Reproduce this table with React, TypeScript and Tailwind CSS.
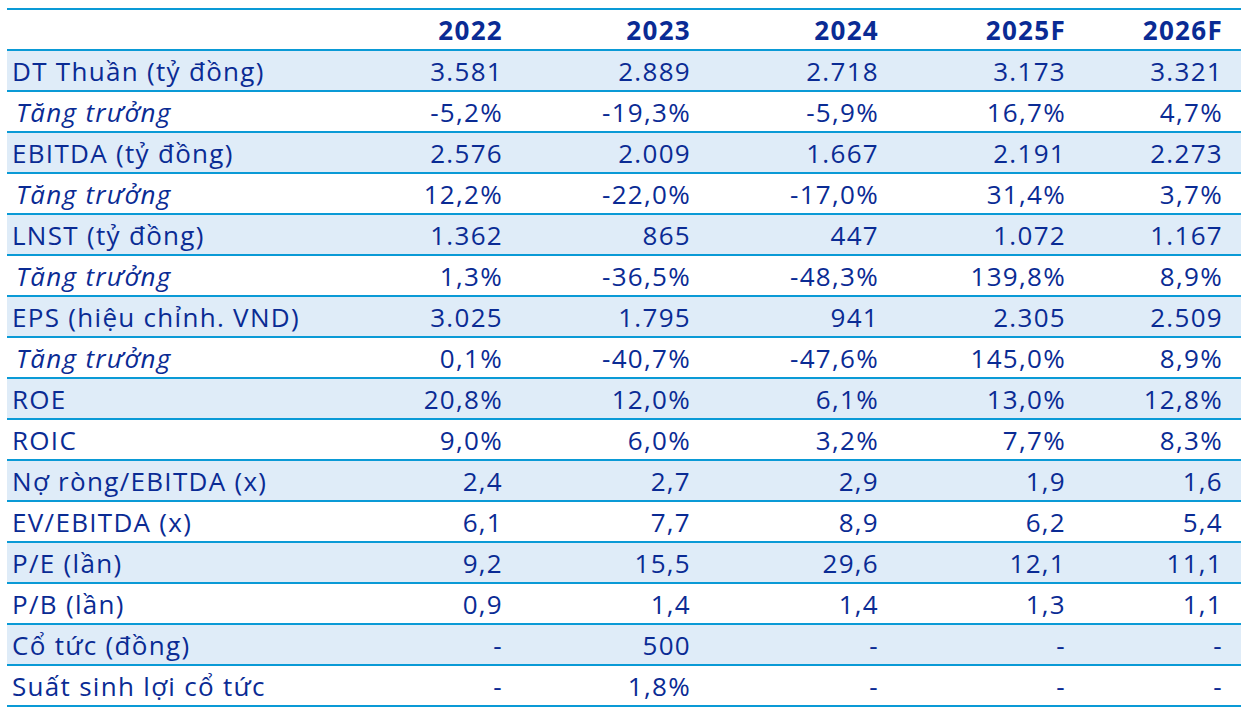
import React from "react";

type Row = { label: string; vals: string[]; italic?: boolean };

const rows: Row[] = [
  { label: "DT Thuần (tỷ đồng)", vals: ["3.581", "2.889", "2.718", "3.173", "3.321"] },
  { label: "Tăng trưởng", italic: true, vals: ["-5,2%", "-19,3%", "-5,9%", "16,7%", "4,7%"] },
  { label: "EBITDA (tỷ đồng)", vals: ["2.576", "2.009", "1.667", "2.191", "2.273"] },
  { label: "Tăng trưởng", italic: true, vals: ["12,2%", "-22,0%", "-17,0%", "31,4%", "3,7%"] },
  { label: "LNST (tỷ đồng)", vals: ["1.362", "865", "447", "1.072", "1.167"] },
  { label: "Tăng trưởng", italic: true, vals: ["1,3%", "-36,5%", "-48,3%", "139,8%", "8,9%"] },
  { label: "EPS (hiệu chỉnh. VND)", vals: ["3.025", "1.795", "941", "2.305", "2.509"] },
  { label: "Tăng trưởng", italic: true, vals: ["0,1%", "-40,7%", "-47,6%", "145,0%", "8,9%"] },
  { label: "ROE", vals: ["20,8%", "12,0%", "6,1%", "13,0%", "12,8%"] },
  { label: "ROIC", vals: ["9,0%", "6,0%", "3,2%", "7,7%", "8,3%"] },
  { label: "Nợ ròng/EBITDA (x)", vals: ["2,4", "2,7", "2,9", "1,9", "1,6"] },
  { label: "EV/EBITDA (x)", vals: ["6,1", "7,7", "8,9", "6,2", "5,4"] },
  { label: "P/E (lần)", vals: ["9,2", "15,5", "29,6", "12,1", "11,1"] },
  { label: "P/B (lần)", vals: ["0,9", "1,4", "1,4", "1,3", "1,1"] },
  { label: "Cổ tức (đồng)", vals: ["-", "500", "-", "-", "-"] },
  { label: "Suất sinh lợi cổ tức", vals: ["-", "1,8%", "-", "-", "-"] },
];

const years = ["2022", "2023", "2024", "2025F", "2026F"];

export default function App() {
  return (
    <div className="w-[1250px] h-[714px] bg-white pt-[8px] pl-[7px]" style={{ fontFamily: '"Open Sans", sans-serif' }}>
      <div className="w-[1234px] text-[#0a2b94] text-[26px] leading-none tracking-[0.05em] font-medium border-b-2 border-[#0a9ad6]">
        <div className="grid grid-cols-[326px_188px_188px_188px_187px_157px] h-[41px] border-t-2 border-[#0a9ad6] items-center font-bold">
          <div />
          {years.map((y) => (
            <div key={y} className="text-right pr-[18px]">{y}</div>
          ))}
        </div>
        {rows.map((r, i) => (
          <div
            key={i}
            className={
              "grid grid-cols-[326px_188px_188px_188px_187px_157px] h-[41px] border-t-2 border-[#0a9ad6] items-center " +
              (i % 2 === 0 ? "bg-[#dfecf8]" : "bg-white")
            }
          >
            <div className={r.italic ? "italic pl-[9px]" : "pl-[5px]"}>{r.label}</div>
            {r.vals.map((v, j) => (
              <div key={j} className="text-right pr-[18px]">{v}</div>
            ))}
          </div>
        ))}
      </div>
    </div>
  );
}
